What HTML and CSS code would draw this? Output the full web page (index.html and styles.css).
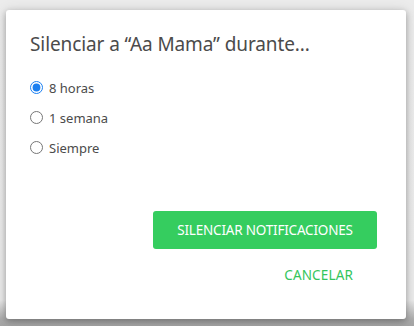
FILE: index.html
```html
<!DOCTYPE html>
<html lang="es">
<head>
<meta charset="utf-8">
<link rel="stylesheet" href="styles.css">
</head>
<body>
<div class="backdrop">
  <div class="dialog">
    <h1 class="title">Silenciar a “Aa Mama” durante...</h1>
    <div class="options">
      <label class="option"><input type="radio" name="mute" checked><span>8 horas</span></label>
      <label class="option"><input type="radio" name="mute"><span>1 semana</span></label>
      <label class="option"><input type="radio" name="mute"><span>Siempre</span></label>
    </div>
    <div class="actions">
      <button class="btn btn-primary">SILENCIAR NOTIFICACIONES</button>
      <button class="btn btn-text">CANCELAR</button>
    </div>
  </div>
</div>
</body>
</html>
```
FILE: styles.css
```css
* { box-sizing: border-box; }
html, body {
  margin: 0;
  padding: 0;
  width: 414px;
  height: 326px;
  overflow: hidden;
}
body {
  font-family: "Noto Sans", "Open Sans", sans-serif;
  background: #e6e6e6;
}
.backdrop {
  width: 414px;
  height: 326px;
  background: linear-gradient(to bottom, #ececec 0, #ebebeb 300px, #a9a9a9 320px, #a4a4a4 326px);
  padding: 10px 8px 0 6px;
}
.dialog {
  width: 400px;
  height: 309px;
  background: #fff;
  border-radius: 3px;
  box-shadow: 0 2px 6px rgba(0,0,0,0.28), 0 1px 14px rgba(0,0,0,0.12);
  padding: 21px 29px 0 24px;
  display: flex;
  flex-direction: column;
}
.title {
  margin: 0;
  font-weight: 400;
  font-size: 19px;
  line-height: 26px;
  color: #4b4b4b;
  letter-spacing: -0.1px;
  white-space: nowrap;
}
.options {
  margin-top: 21px;
  display: flex;
  flex-direction: column;
  gap: 11px;
}
.option {
  display: flex;
  align-items: center;
  height: 19px;
  font-size: 13px;
  color: #4b4b4b;
}
.option input {
  margin: 0 6px 0 0;
  width: 13px;
  height: 13px;
  accent-color: #1b7ff0;
}
.actions {
  margin-top: 54px;
  display: flex;
  flex-direction: column;
  align-items: flex-end;
  gap: 7px;
}
.btn {
  font-family: inherit;
  font-size: 13.5px;
  border: none;
  cursor: pointer;
  padding: 0 24px;
  height: 38px;
  border-radius: 3px;
  white-space: nowrap;
  letter-spacing: -0.2px;
}
.btn-primary {
  background: #35cd5f;
  color: #fff;
  width: 224px;
  padding: 0 8px;
}
.btn-text {
  background: transparent;
  color: #33c55c;
  letter-spacing: 0.15px;
}
```
